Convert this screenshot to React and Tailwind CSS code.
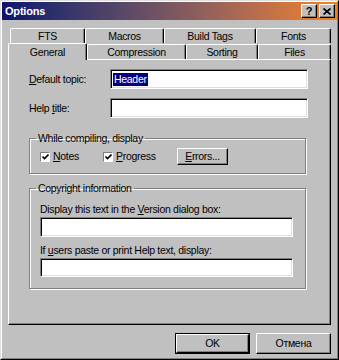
import React from 'react';

const font = { fontFamily: '"Liberation Sans", Arial, sans-serif' };

// raised 3d edge used by buttons and tabs
const raised =
  'border-t border-l border-white border-r border-b border-r-black border-b-black shadow-[inset_-1px_-1px_0_#808080]';
const sunken =
  'bg-white border-t border-l border-[#808080] border-r border-b border-r-white border-b-white shadow-[inset_1px_1px_0_#000,inset_-1px_-1px_0_#dfdfdf]';
const txt = 'text-[10.5px] tracking-[-0.3px] leading-none';

function Tab({ label, w, selected }) {
  return (
    <div
      className={`${selected ? 'h-[17px] relative z-10 -mb-px' : 'h-[15px]'} ${w} flex items-center justify-center bg-[#c0c0c0] border-t border-l border-white border-r border-r-black rounded-t-[2px] shadow-[inset_-1px_0_0_#808080] ${txt} text-black`}
    >
      {label}
    </div>
  );
}

function Check({ label, u, rest, w }) {
  return (
    <div className={`flex items-center ${w}`}>
      <div className="w-[10px] h-[10px] bg-white border-t border-l border-[#808080] border-r border-b border-r-white border-b-white flex items-center justify-center">
        <svg width="7" height="6" viewBox="0 0 7 6">
          <path d="M0.5 2.5 L2.5 4.5 L6.5 0.5" stroke="#000" strokeWidth="1.6" fill="none" />
        </svg>
      </div>
      <span className={`ml-[3px] ${txt}`}>
        <u>{u}</u>
        {rest}
      </span>
    </div>
  );
}

function Group({ title, className, children }) {
  return (
    <fieldset
      className={`border border-[#808080] shadow-[inset_1px_1px_0_#fff,1px_1px_0_#fff] ${className}`}
    >
      <legend className={`ml-[6px] px-[2px] text-[10.5px] tracking-[-0.3px] leading-[13px]`}>{title}</legend>
      {children}
    </fieldset>
  );
}

export default function App() {
  return (
    <div
      className="w-[339px] h-[360px] bg-[#c0c0c0] border-t border-l border-[#dfdfdf] border-r border-b border-r-black border-b-black text-black"
      style={font}
    >
      <div className="h-full border-t border-l border-white border-r border-b border-r-[#808080] border-b-[#808080]">
        {/* title bar */}
        <div className="h-[18px] flex items-center justify-between bg-linear-to-r from-[#10126c] to-[#f5820e] pl-[3px] pr-[2px]">
          <span className="text-white font-bold text-[11px] tracking-[-0.2px] leading-none">Options</span>
          <div className="flex gap-[2px]">
            <div className={`w-[16px] h-[14px] bg-[#c0c0c0] ${raised} flex items-center justify-center text-[11px] font-bold leading-none`}>
              ?
            </div>
            <div className={`w-[16px] h-[14px] bg-[#c0c0c0] ${raised} flex items-center justify-center`}>
              <svg width="8" height="7" viewBox="0 0 8 7">
                <path d="M0.5 0.5 L7.5 6.5 M7.5 0.5 L0.5 6.5" stroke="#000" strokeWidth="1.7" />
              </svg>
            </div>
          </div>
        </div>

        {/* tabs */}
        <div className="mt-[8px] ml-[8px] flex">
          <Tab label="FTS" w="w-[75px]" />
          <Tab label="Macros" w="w-[79px]" />
          <Tab label="Build Tags" w="w-[92px]" />
          <Tab label="Fonts" w="w-[75px]" />
        </div>
        <div className="ml-[6px] flex items-end">
          <Tab label="General" w="w-[79px]" selected />
          <Tab label="Compression" w="w-[99px]" />
          <Tab label="Sorting" w="w-[72px]" />
          <Tab label="Files" w="w-[73px]" />
        </div>

        {/* page */}
        <div className="ml-[6px] w-[323px] h-[266px] border-t border-l border-white border-r border-b border-r-black border-b-black shadow-[inset_-1px_-1px_0_#808080] pl-[20px] pt-[9px]">
          <div className="flex items-center">
            <span className={`w-[81px] ${txt}`}>
              <u>D</u>efault topic:
            </span>
            <div className={`w-[198px] h-[20px] ${sunken} flex items-center pl-[2px]`}>
              <span className="bg-[#000080] text-white text-[10.5px] tracking-[-0.3px] leading-[13px] px-px">Header</span>
            </div>
          </div>
          <div className="flex items-center mt-[9px]">
            <span className={`w-[81px] ${txt}`}>
              Help <u>t</u>itle:
            </span>
            <div className={`w-[198px] h-[20px] ${sunken}`} />
          </div>

          <Group title="While compiling, display" className="mt-[14px] w-[277px] h-[42px]">
            <div className="flex items-center pl-[10px] pt-[3px]">
              <Check u="N" rest="otes" w="w-[63px]" />
              <Check u="P" rest="rogress" w="w-[74px]" />
              <div className={`w-[51px] h-[17px] bg-[#c0c0c0] ${raised} flex items-center justify-center ${txt}`}>
                <span>
                  <u>E</u>rrors...
                </span>
              </div>
            </div>
          </Group>

          <Group title="Copyright information" className="mt-[8px] w-[277px] h-[107px]">
            <div className="pl-[10px] pt-[9px]">
              <div className={txt}>
                Display this text in the <u>V</u>ersion dialog box:
              </div>
              <div className={`mt-[2px] w-[253px] h-[20px] ${sunken}`} />
              <div className={`mt-[8px] ${txt}`}>
                If <u>u</u>sers paste or print Help text, display:
              </div>
              <div className={`mt-[3px] w-[253px] h-[19px] ${sunken}`} />
            </div>
          </Group>
        </div>

        {/* dialog buttons */}
        <div className="mt-[8px] mr-[6px] flex justify-end gap-[6px]">
          <div className="w-[75px] h-[21px] border border-black">
            <div className={`h-full bg-[#c0c0c0] ${raised} flex items-center justify-center ${txt}`}>
              OK
            </div>
          </div>
          <div className={`w-[75px] h-[21px] bg-[#c0c0c0] ${raised} flex items-center justify-center ${txt}`}>
            Отмена
          </div>
        </div>
      </div>
    </div>
  );
}
